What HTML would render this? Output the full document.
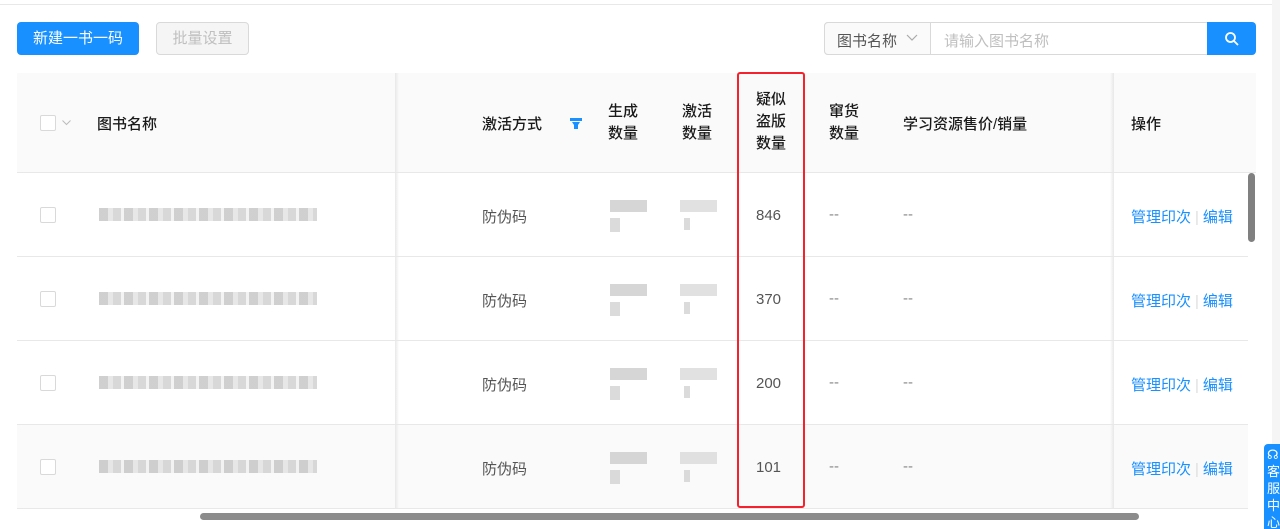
<!DOCTYPE html>
<html><head><meta charset="utf-8"><style>
*{margin:0;padding:0;box-sizing:border-box}
body{width:1280px;height:529px;overflow:hidden;background:#fff;position:relative;font-family:"Liberation Sans","Noto Sans CJK SC",sans-serif;font-size:15px;color:#333}
.a{position:absolute}
.t{position:absolute;white-space:nowrap}
.h{color:#1a1a1a;font-weight:500}
.cb{position:absolute;width:16px;height:16px;border:1px solid #d9d9d9;border-radius:2px;background:#fff}
.hl{position:absolute;left:17px;width:1231px;height:1px;background:#e8e8e8}
.blk{position:absolute;background:#ccc;opacity:.7}
.link{color:#1890ff}
</style></head><body>
<div class="a" style="left:0;top:4px;width:1272px;height:1px;background:#e8e8e8"></div>
<div class="a" style="left:1272px;top:0;width:8px;height:529px;background:#f5f5f5"></div>
<div class="a" style="left:17px;top:22px;width:122px;height:33px;background:#1890ff;border-radius:4px;color:#fff;font-size:15px;line-height:33px;text-align:center">新建一书一码</div>
<div class="a" style="left:156px;top:22px;width:93px;height:33px;background:#f5f5f5;border:1px solid #d9d9d9;border-radius:4px;color:#bfbfbf;font-size:15px;line-height:31px;text-align:center">批量设置</div>
<div class="a" style="left:824px;top:22px;width:384px;height:33px;border:1px solid #d9d9d9;border-radius:4px 0 0 4px;background:#fff"></div>
<div class="a" style="left:824px;top:22px;width:107px;height:33px;border:1px solid #d9d9d9;border-radius:4px 0 0 4px;background:#fafafa"></div>
<div class="t" style="left:837px;top:30px;font-size:15px;color:#555">图书名称</div>
<svg class="a" style="left:906px;top:34px" width="12" height="8" viewBox="0 0 12 8"><path d="M1 1l5 5 5-5" fill="none" stroke="#aaa" stroke-width="1.2"/></svg>
<div class="t" style="left:944px;top:30px;font-size:15px;color:#bfbfbf">请输入图书名称</div>
<div class="a" style="left:1207px;top:22px;width:49px;height:33px;background:#1890ff;border-radius:0 4px 4px 0"></div>
<svg class="a" style="left:1224px;top:31px" width="16" height="16" viewBox="0 0 16 16"><circle cx="6.5" cy="6.5" r="4.5" fill="none" stroke="#fff" stroke-width="1.8"/><path d="M10 10l4 4" stroke="#fff" stroke-width="1.8"/></svg>
<div class="a" style="left:17px;top:73px;width:1239px;height:100px;background:#fafafa"></div>
<div class="hl" style="top:172px;width:1239px"></div>
<div class="a" style="left:17px;top:425px;width:1231px;height:83px;background:#fafafa"></div>
<div class="hl" style="top:256px"></div><div class="hl" style="top:340px"></div><div class="hl" style="top:424px"></div><div class="hl" style="top:508px"></div>
<div class="a" style="left:395px;top:73px;width:4px;height:436px;background:linear-gradient(90deg,#e8e8e8,rgba(0,0,0,0))"></div>
<div class="a" style="left:1110px;top:73px;width:4px;height:436px;background:linear-gradient(270deg,#e8e8e8,rgba(0,0,0,0))"></div>
<div class="cb" style="left:40px;top:115px"></div>
<svg class="a" style="left:62px;top:120px" width="9" height="6" viewBox="0 0 9 6"><path d="M.5.5l4 4 4-4" fill="none" stroke="#bbb"/></svg>
<div class="t h" style="left:97px;top:113px">图书名称</div>
<div class="t h" style="left:482px;top:113px">激活方式</div>
<svg class="a" style="left:570px;top:118px" width="12" height="11" viewBox="0 0 12 11"><path d="M0 0h12v3H0zM2 4h8l-2 3v4H4V7z" fill="#1890ff"/></svg>
<div class="t h" style="left:608px;top:101px;line-height:22px">生成<br>数量</div>
<div class="t h" style="left:682px;top:101px;line-height:22px">激活<br>数量</div>
<div class="t h" style="left:756px;top:89px;line-height:22px">疑似<br>盗版<br>数量</div>
<div class="t h" style="left:829px;top:101px;line-height:22px">窜货<br>数量</div>
<div class="t h" style="left:903px;top:113px">学习资源售价/销量</div>
<div class="t h" style="left:1131px;top:113px">操作</div>
<div id="rows"></div>
<script>
var ys=[215,299,383,467],nums=["846","370","200","101"],h="";
for(var i=0;i<4;i++){var y=ys[i];
h+='<div class="cb" style="left:40px;top:'+(y-8)+'px"></div>';
h+='<div class="blk" style="left:99px;top:'+(y-7)+'px;width:218px;height:13px;background:repeating-linear-gradient(90deg,#bbb 0 9px,#ddd 9px 14px,#c8c8c8 14px 22px,#eee 22px 25px)"></div>';
h+='<div class="t" style="left:482px;top:'+(y-9)+'px;color:#555">防伪码</div>';
h+='<div class="blk" style="left:610px;top:'+(y-15)+'px;width:37px;height:12px;background:#c4c4c4"></div><div class="blk" style="left:610px;top:'+(y+3)+'px;width:10px;height:14px;background:#ccc"></div>';
h+='<div class="blk" style="left:680px;top:'+(y-15)+'px;width:37px;height:12px;background:#d4d4d4"></div><div class="blk" style="left:684px;top:'+(y+3)+'px;width:6px;height:12px;background:#ccc"></div>';
h+='<div class="t" style="left:756px;top:'+(y-8)+'px;color:#555">'+nums[i]+'</div>';
h+='<div class="t" style="left:829px;top:'+(y-9)+'px;color:#888">--</div><div class="t" style="left:903px;top:'+(y-9)+'px;color:#888">--</div>';
h+='<div class="t link" style="left:1131px;top:'+(y-9)+'px">管理印次<span style="color:#ddd;margin:0 4px">|</span>编辑</div>';}
document.getElementById('rows').innerHTML=h;
</script>
<div class="a" style="left:737px;top:72px;width:68px;height:436px;border:2px solid #f5222d;border-radius:3px"></div>
<div class="a" style="left:200px;top:513px;width:939px;height:7px;background:#8c8c8c;border-radius:4px"></div>
<div class="a" style="left:1248px;top:173px;width:7px;height:69px;background:#808080;border-radius:4px"></div>
<div class="a" style="left:1264px;top:444px;width:16px;height:85px;background:#1890ff;border-radius:4px 0 0 0;color:#fff;font-size:13px;line-height:17px;padding-left:3px;padding-top:2px;overflow:hidden">☊<br>客<br>服<br>中<br>心</div>
</body></html>
